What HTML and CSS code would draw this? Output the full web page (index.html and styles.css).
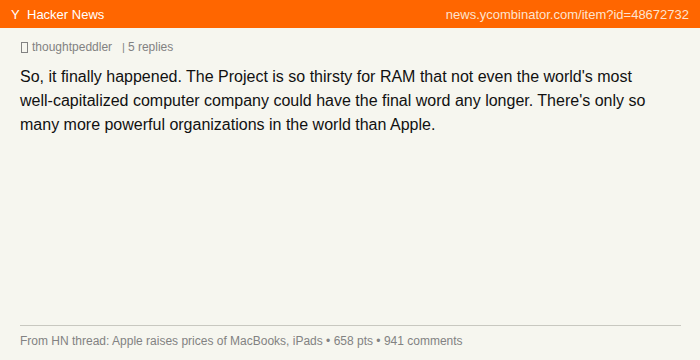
FILE: index.html
```html
<!DOCTYPE html>
<html>
<head>
<meta charset="utf-8">
<link rel="stylesheet" href="styles.css">
</head>
<body>
<div class="page">
  <header class="topbar">
    <span class="logo">Y</span>
    <span class="site">Hacker News</span>
    <span class="url">news.ycombinator.com/item?id=48672732</span>
  </header>
  <main class="content">
    <div class="meta">
      <span class="tofu"></span>
      <span class="user">thoughtpeddler</span>
      <span class="sep">|</span>
      <span class="replies">5 replies</span>
    </div>
    <p class="comment">So, it finally happened. The Project is so thirsty for RAM that not even the world's most well-capitalized computer company could have the final word any longer. There's only so many more powerful organizations in the world than Apple.</p>
  </main>
  <footer class="foot">From HN thread: Apple raises prices of MacBooks, iPads • 658 pts • 941 comments</footer>
</div>
</body>
</html>
```
FILE: styles.css
```css
html, body {
  margin: 0;
  padding: 0;
  background: #f6f6ef;
  font-family: "Liberation Sans", Arial, sans-serif;
}
.page {
  width: 700px;
  height: 360px;
  display: flex;
  flex-direction: column;
  box-sizing: border-box;
}
.topbar {
  height: 28px;
  background: #ff6600;
  display: flex;
  align-items: center;
  padding: 0 11px 0 11px;
  color: #fff;
  font-size: 13px;
}
.logo {
  width: 9px;
  margin-right: 7px;
}
.site {
  flex: 1;
}
.url {
  color: #fde3cf;
  font-size: 13px;
}
.content {
  padding: 11px 20px 0 20px;
  flex: 1;
}
.meta {
  display: flex;
  align-items: center;
  font-size: 12px;
  line-height: 16px;
  color: #828282;
}
.tofu {
  width: 5px;
  height: 9px;
  border: 1px solid #828282;
  margin-left: 1px;
  margin-right: 4px;
}
.sep {
  margin-left: 10px;
  margin-right: 3px;
  font-size: 11px;
}
.comment {
  margin: 10px 0 0 0;
  max-width: 640px;
  font-size: 16px;
  line-height: 24px;
  color: #111;
}
.foot {
  margin: 0 19px 0 20px;
  border-top: 1px solid #c8c8c0;
  padding: 7px 0 11px 0;
  font-size: 12px;
  line-height: 16px;
  color: #828282;
}
```
